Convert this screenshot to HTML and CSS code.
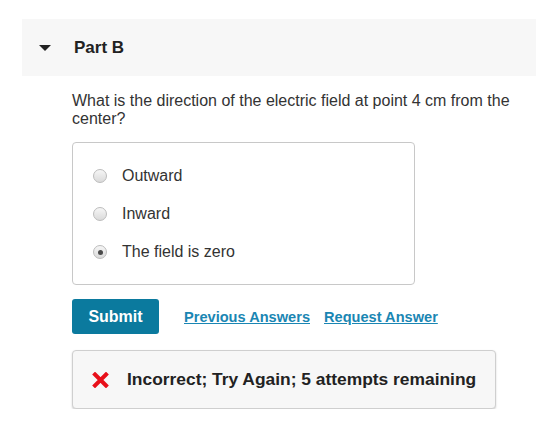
FILE: index.html
```html
<!DOCTYPE html>
<html lang="en">
<head>
<meta charset="utf-8">
<title>Part B</title>
<link rel="stylesheet" href="styles.css">
</head>
<body>
<div class="part">
  <div class="part-header">
    <span class="caret"></span>
    <h2 class="part-title">Part B</h2>
  </div>
  <div class="part-body">
    <p class="question">What is the direction of the electric field at point 4 cm from the center?</p>
    <div class="choices">
      <label class="choice"><span class="radio"></span><span class="choice-text">Outward</span></label>
      <label class="choice"><span class="radio"></span><span class="choice-text">Inward</span></label>
      <label class="choice"><span class="radio checked"></span><span class="choice-text">The field is zero</span></label>
    </div>
    <div class="actions">
      <button class="submit" type="button">Submit</button>
      <a class="link" href="#">Previous Answers</a>
      <a class="link" href="#">Request Answer</a>
    </div>
    <div class="feedback">
      <svg class="x-icon" width="17" height="16" viewBox="0 0 17 16" aria-hidden="true">
        <path d="M3 2.5 L14 13.5 M14 2.5 L3 13.5" stroke="#e8101a" stroke-width="4" stroke-linecap="square"/>
      </svg>
      <span class="feedback-text">Incorrect; Try Again; 5 attempts remaining</span>
    </div>
  </div>
</div>
</body>
</html>
```
FILE: styles.css
```css
html, body {
  margin: 0;
  padding: 0;
  background: #fff;
}

body {
  font-family: "Liberation Sans", Arial, Helvetica, sans-serif;
  color: #333;
}

.part {
  padding: 19px 24px 0 22px;
}

.part-header {
  display: flex;
  align-items: center;
  height: 57px;
  background: #f7f7f7;
}

.caret {
  width: 0;
  height: 0;
  margin-left: 17px;
  border-left: 6px solid transparent;
  border-right: 6px solid transparent;
  border-top: 6px solid #222;
}

.part-title {
  margin: 0 0 0 23px;
  font-size: 17px;
  font-weight: bold;
  color: #222;
}

.part-body {
  padding-left: 50px;
}

.question {
  margin: 16px 0 0;
  font-size: 16px;
  line-height: 18px;
  color: #333;
}

.choices {
  width: 341px;
  margin-top: 14px;
  padding: 14px 0 13px;
  border: 1px solid #c8c8c8;
  border-radius: 4px;
  display: flex;
  flex-direction: column;
}

.choice {
  display: flex;
  align-items: center;
  height: 38px;
  padding-left: 20px;
  font-size: 16px;
  color: #333;
}

.radio {
  box-sizing: border-box;
  width: 14px;
  height: 14px;
  border-radius: 50%;
  border: 1px solid #bcbcbc;
  background: linear-gradient(#f6f6f6, #dadada);
  display: flex;
  align-items: center;
  justify-content: center;
}

.radio.checked::after {
  content: "";
  width: 5px;
  height: 5px;
  border-radius: 50%;
  background: #4a4a4a;
}

.choice-text {
  margin-left: 15px;
}

.actions {
  display: flex;
  align-items: center;
  margin-top: 14px;
}

.submit {
  width: 87px;
  height: 35px;
  border: none;
  border-radius: 3px;
  background: #0b7a9e;
  color: #fff;
  font-family: inherit;
  font-size: 16px;
  font-weight: bold;
  padding: 0;
}

.link {
  margin-left: 25px;
  font-size: 14.6px;
  font-weight: bold;
  color: #1a86b3;
  text-decoration: underline;
}

.link + .link {
  margin-left: 14px;
}

.feedback {
  box-sizing: border-box;
  width: 424px;
  height: 59px;
  margin-top: 16px;
  display: flex;
  align-items: center;
  padding-left: 19px;
  background: #f7f7f7;
  border: 1px solid #cfcfcf;
  border-radius: 4px;
  box-shadow: 0 1px 2px rgba(0, 0, 0, 0.18);
}

.x-icon {
  flex: none;
}

.feedback-text {
  margin-left: 18px;
  font-size: 17.4px;
  font-weight: bold;
  color: #222;
}
```
